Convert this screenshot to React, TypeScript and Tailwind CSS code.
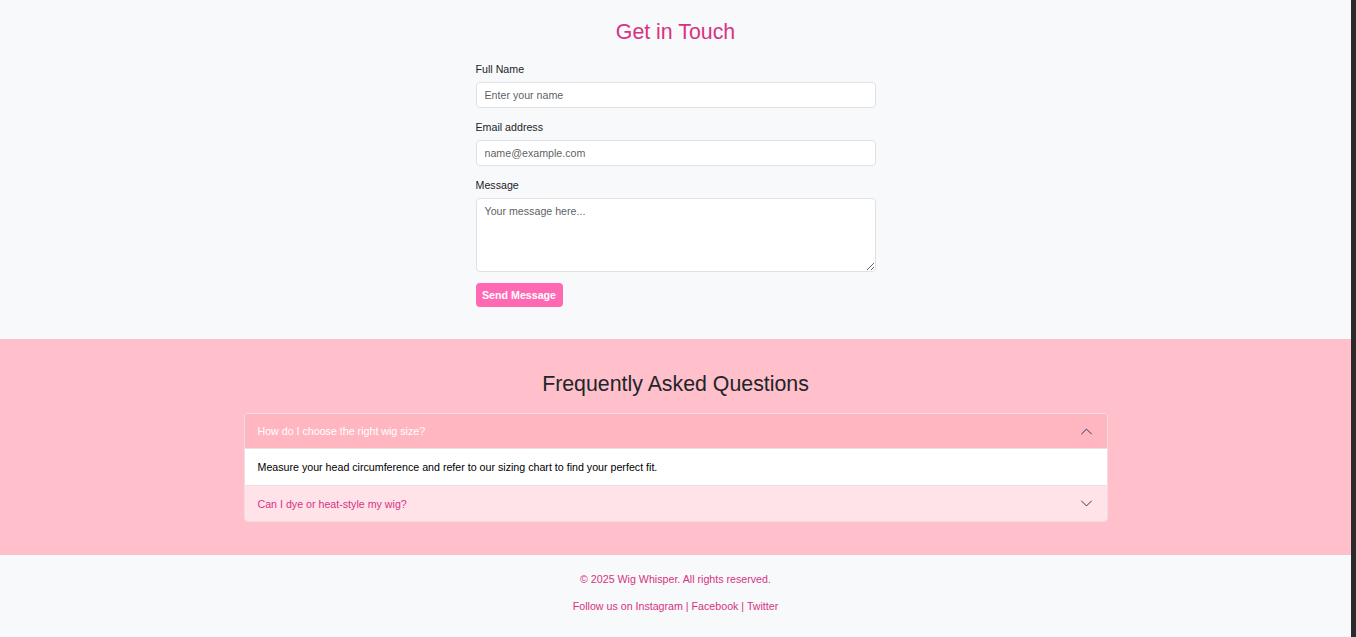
import React from "react";

const Chevron = ({ up }: { up?: boolean }) => (
    <svg
        width="13"
        height="13"
        viewBox="0 0 16 16"
        className={up ? "rotate-180" : ""}
        fill="none"
        stroke={up ? "#052c65" : "#212529"}
        strokeWidth="1.1"
        strokeLinecap="round"
        strokeLinejoin="round"
    >
        <path d="M2 5L8 11L14 5" />
    </svg>
);

const App: React.FC = () => {
    return (
        <div className="flex h-[637px] w-full overflow-hidden font-['Liberation_Sans',Arial,sans-serif] text-[10.67px] leading-[16px] text-[#212529]">
            <div className="flex flex-1 flex-col bg-[#f8f9fa]">
                {/* Contact form */}
                <section className="pt-[20px] pb-[32px]">
                    <h2 className="text-center text-[21.33px] leading-[25.6px] text-[#d63384] mb-[15px]">Get in Touch</h2>
                    <form className="mx-auto w-[400px] flex flex-col" onSubmit={(e) => e.preventDefault()}>
                        <label className="mb-[5.33px]">Full Name</label>
                        <input
                            type="text"
                            placeholder="Enter your name"
                            className="mb-[10.67px] h-[26px] w-full rounded-[4px] border border-[#dee2e6] bg-white px-[8px] outline-none placeholder:text-[rgba(33,37,41,0.75)]"
                        />
                        <label className="mb-[5.33px]">Email address</label>
                        <input
                            type="email"
                            placeholder="name@example.com"
                            className="mb-[10.67px] h-[26px] w-full rounded-[4px] border border-[#dee2e6] bg-white px-[8px] outline-none placeholder:text-[rgba(33,37,41,0.75)]"
                        />
                        <label className="mb-[5.33px]">Message</label>
                        <textarea
                            placeholder="Your message here..."
                            className="mb-[11px] h-[74px] w-full rounded-[4px] border border-[#dee2e6] bg-white px-[8px] py-[4px] outline-none placeholder:text-[rgba(33,37,41,0.75)]"
                        />
                        <div>
                            <button
                                type="submit"
                                className="h-[24px] rounded-[4px] bg-[#ff69b4] px-[6.5px] font-bold text-white"
                            >
                                Send Message
                            </button>
                        </div>
                    </form>
                </section>

                {/* FAQ */}
                <section className="bg-[#ffc0cb] pt-[33px] pb-[33px]">
                    <h2 className="text-center text-[21.33px] leading-[25.6px] text-[#212529] mb-[16px]">Frequently Asked Questions</h2>
                    <div className="mx-auto w-[864px] overflow-hidden rounded-[4px] border border-[#ebdfe2]">
                        <div className="flex h-[34px] items-center justify-between bg-[#ffb6c1] pl-[13px] pr-[14px] text-white">
                            <span>How do I choose the right wig size?</span>
                            <Chevron up />
                        </div>
                        <div className="flex h-[37px] items-center border-t border-[#ebdfe2] bg-white px-[13px] text-black">
                            Measure your head circumference and refer to our sizing chart to find your perfect fit.
                        </div>
                        <div className="flex h-[36px] items-center justify-between border-t border-[#ebdfe2] bg-[#ffe3e9] pl-[13px] pr-[14px] text-[#d63384]">
                            <span>Can I dye or heat-style my wig?</span>
                            <Chevron />
                        </div>
                    </div>
                </section>

                {/* Footer */}
                <footer className="flex-1 pt-[16px] text-center text-[#d63384]">
                    <p className="mb-[10.67px]">© 2025 Wig Whisper. All rights reserved.</p>
                    <p>Follow us on Instagram | Facebook | Twitter</p>
                </footer>
            </div>
            <div className="w-[5px] bg-[#2b2b2b]" />
        </div>
    );
};

export default App;
